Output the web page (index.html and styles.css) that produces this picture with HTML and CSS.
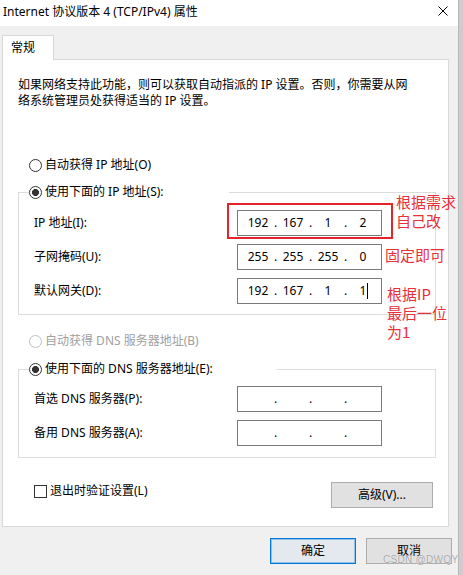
FILE: index.html
```html
<!DOCTYPE html>
<html lang="zh-CN">
<head>
<meta charset="utf-8">
<title>Internet 协议版本 4 (TCP/IPv4) 属性</title>
<link rel="stylesheet" href="styles.css">
</head>
<body>
<div class="screen">
  <div class="dialog">
    <div class="titlebar">
      <span class="title">Internet 协议版本 4 (TCP/IPv4) 属性</span>
      <svg class="close" viewBox="0 0 10 10" width="10" height="10"><path d="M0.5 0.5 L9.5 9.5 M9.5 0.5 L0.5 9.5" stroke="#000" stroke-width="1" fill="none"/></svg>
    </div>
    <div class="tabstrip"><div class="tab">常规</div></div>
    <div class="panel">
      <p class="intro">如果网络支持此功能，则可以获取自动指派的 IP 设置。否则，你需要从网<br>络系统管理员处获得适当的 IP 设置。</p>

      <div class="radio solo"><span class="rb"></span>自动获得 IP 地址(O)</div>

      <div class="group g1">
        <div class="group-head">
          <span class="gl"></span>
          <div class="radio legend"><span class="rb on"></span>使用下面的 IP 地址(S):</div>
          <span class="gr"></span>
        </div>
        <div class="group-body">
          <div class="field"><span class="lbl">IP 地址(I):</span>
            <div class="ip"><span class="oct">192</span><span class="sep">.</span><span class="oct">167</span><span class="sep">.</span><span class="oct">1</span><span class="sep">.</span><span class="oct">2</span></div>
          </div>
          <div class="field"><span class="lbl">子网掩码(U):</span>
            <div class="ip"><span class="oct">255</span><span class="sep">.</span><span class="oct">255</span><span class="sep">.</span><span class="oct">255</span><span class="sep">.</span><span class="oct">0</span></div>
          </div>
          <div class="field"><span class="lbl">默认网关(D):</span>
            <div class="ip"><span class="oct">192</span><span class="sep">.</span><span class="oct">167</span><span class="sep">.</span><span class="oct">1</span><span class="sep">.</span><span class="oct">1<span class="caret"></span></span></div>
          </div>
        </div>
      </div>

      <div class="radio solo off"><span class="rb"></span>自动获得 DNS 服务器地址(B)</div>

      <div class="group g2">
        <div class="group-head">
          <span class="gl"></span>
          <div class="radio legend"><span class="rb on"></span>使用下面的 DNS 服务器地址(E):</div>
          <span class="gr"></span>
        </div>
        <div class="group-body">
          <div class="field"><span class="lbl">首选 DNS 服务器(P):</span>
            <div class="ip"><span class="oct"></span><span class="sep">.</span><span class="oct"></span><span class="sep">.</span><span class="oct"></span><span class="sep">.</span><span class="oct"></span></div>
          </div>
          <div class="field"><span class="lbl">备用 DNS 服务器(A):</span>
            <div class="ip"><span class="oct"></span><span class="sep">.</span><span class="oct"></span><span class="sep">.</span><span class="oct"></span><span class="sep">.</span><span class="oct"></span></div>
          </div>
        </div>
      </div>

      <div class="opts">
        <div class="check"><span class="box"></span>退出时验证设置(L)</div>
        <div class="btn adv">高级(V)...</div>
      </div>
    </div>
    <div class="footer">
      <div class="btn ok">确定</div>
      <div class="btn">取消</div>
    </div>
  </div>
  <div class="edge"></div>

  <div class="mark"></div>
  <div class="note n1">根据需求<br>自己改</div>
  <div class="note n2">固定即可</div>
  <div class="note n3">根据IP<br>最后一位<br>为1</div>
  <div class="wm">CSDN @DWQY</div>
</div>
</body>
</html>
```

FILE: styles.css
```css
* { box-sizing: border-box; }

body {
  margin: 0;
  background: #f0f0f0;
  font: 12px/16px "Noto Sans", "Noto Sans CJK SC", sans-serif;
  color: #000;
}

.screen {
  position: relative;
  display: flex;
  width: 463px;
  height: 575px;
  overflow: hidden;
}

.dialog {
  width: 458px;
  display: flex;
  flex-direction: column;
  background: #f0f0f0;
}

.edge {
  flex: 1;
  background: #cdcdcd;
  border-left: 1px solid #b8b8b8;
}

.titlebar {
  height: 26px;
  background: #fff;
  display: flex;
  justify-content: space-between;
  align-items: flex-start;
}

.title { padding: 4px 0 0 3px; }

.close { margin: 6px 10px 0 0; }

.tabstrip {
  display: flex;
  padding: 9px 0 0 2px;
}

.tab {
  position: relative;
  z-index: 1;
  width: 52px;
  height: 25px;
  margin-bottom: -1px;
  padding-left: 8px;
  line-height: 23px;
  background: #fff;
  border: 1px solid #d9d9d9;
  border-bottom: 0;
}

.panel {
  margin-left: 2px;
  width: 447px;
  height: 468px;
  padding: 17px 0 0 15px;
  background: #fff;
  border: 1px solid #d9d9d9;
}

.intro { margin: 0; }

.radio {
  display: flex;
  align-items: center;
  height: 16px;
  white-space: nowrap;
}

.radio.solo { margin-left: 11px; margin-top: 48px; }
.radio.solo.off { margin-top: 18px; color: #a0a0a0; }

.rb {
  width: 13px;
  height: 13px;
  margin-right: 3px;
  border: 1px solid #333;
  border-radius: 50%;
  background: #fff;
  flex: none;
}
.rb.on { background: radial-gradient(circle, #333 0 3.2px, #fff 3.8px); }
.off .rb { border-color: #bfbfbf; }

.group { width: 418px; margin-top: 11px; }
.g2 { margin-top: 12px; }

.group-head { display: flex; height: 16px; }

.gl, .gr {
  margin-top: 8px;
  border-top: 1px solid #dcdcdc;
}
.gl { width: 11px; border-left: 1px solid #dcdcdc; }
.gr { flex: 1; border-right: 1px solid #dcdcdc; }

.g1 .legend { width: 200px; }
.g2 .legend { width: 248px; }

.group-body {
  display: flex;
  flex-direction: column;
  gap: 8px;
  padding: 10px 0 10px 15px;
  border: 1px solid #dcdcdc;
  border-top: 0;
}
.g2 .group-body { padding-top: 9px; padding-bottom: 11px; }

.field { display: flex; align-items: center; }
.lbl { width: 203px; white-space: nowrap; }

.ip {
  width: 145px;
  height: 26px;
  display: flex;
  align-items: center;
  padding-left: 6px;
  background: #fff;
  border: 1px solid #7a7a7a;
}
.oct { position: relative; width: 28px; height: 16px; text-align: center; }
.sep { width: 7px; text-align: center; }

.caret {
  position: absolute;
  left: 18px;
  top: 0;
  width: 1px;
  height: 16px;
  background: #000;
}

.opts {
  width: 418px;
  margin-top: 24px;
  display: flex;
  justify-content: space-between;
  align-items: flex-start;
}

.check {
  display: flex;
  align-items: center;
  margin: 1px 0 0 16px;
}
.box {
  width: 13px;
  height: 13px;
  margin-right: 3px;
  border: 1px solid #333;
  background: #fff;
}

.btn {
  height: 26px;
  display: flex;
  align-items: center;
  justify-content: center;
  background: #e1e1e1;
  border: 1px solid #adadad;
}
.adv { width: 102px; margin-right: 3px; }

.footer {
  display: flex;
  justify-content: flex-end;
  gap: 10px;
  padding: 11px 6px 0 0;
}
.footer .btn { width: 86px; }
.btn.ok {
  background: #e3e9ee;
  border-color: #0078d7;
  box-shadow: inset 0 0 0 1px rgba(0, 120, 215, 0.35);
}

.mark {
  position: absolute;
  left: 227px;
  top: 203px;
  width: 166px;
  height: 36px;
  border: 2px solid #e8222b;
}

.note {
  position: absolute;
  color: #e8303a;
  font: 15px/19px "Noto Sans CJK SC", sans-serif;
  white-space: nowrap;
}
.n1 { left: 396px; top: 192px; }
.n2 { left: 385px; top: 245px; }
.n3 { left: 387px; top: 284px; }

.wm {
  position: absolute;
  left: 383px;
  top: 553px;
  font: 10px/14px "Liberation Sans", sans-serif;
  letter-spacing: 0.3px;
  color: rgba(130, 130, 130, 0.7);
  text-shadow: 0 0 1px #fff;
}
```
